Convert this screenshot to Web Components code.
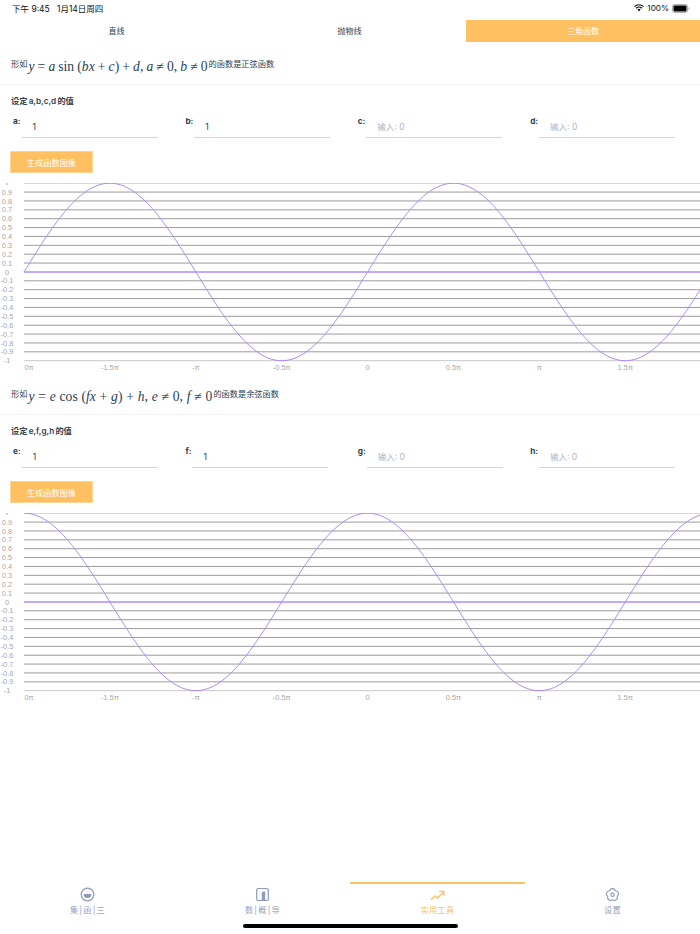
<!DOCTYPE html>
<html lang="zh">
<head>
<meta charset="utf-8">
<title>三角函数</title>
<style>
  html, body { margin: 0; padding: 0; background: #fff; }
  body { font-family: "Inter", "Liberation Sans", "Noto Sans CJK SC", sans-serif; color: #2c3e50; }
</style>
</head>
<body>
<app-page>
  <status-bar slot="status"></status-bar>
  <top-tabs slot="tabs"></top-tabs>
  <trig-panel letters="a,b,c,d" values="1,1" fn="sin" func-name="正弦函数" style="--math-gap: -0.27px">
    <span slot="formula"><i>y</i> = <i>a</i> sin (<i>bx</i> + <i>c</i>) + <i>d</i>, <i>a</i> ≠ 0, <i>b</i> ≠ 0</span>
  </trig-panel>
  <trig-panel letters="e,f,g,h" values="1,1" fn="cos" func-name="余弦函数" style="--math-gap: 0.4px">
    <span slot="formula"><i>y</i> = <i>e</i> cos (<i>fx</i> + <i>g</i>) + <i>h</i>, <i>e</i> ≠ 0, <i>f</i> ≠ 0</span>
  </trig-panel>
  <bottom-tabs slot="bottom"></bottom-tabs>
</app-page>

<script>
const SVG_NS = "http://www.w3.org/2000/svg";

class AppPage extends HTMLElement {
  constructor () {
    super();
    this.attachShadow({ mode: "open" });
    this.shadowRoot.innerHTML = `
      <style>
        :host { display: flex; flex-direction: column; width: 700px; height: 934px; position: relative; overflow: hidden; background: #fff; }
        main { flex: 1; min-height: 0; }
        .home { position: absolute; left: 243px; bottom: 6px; width: 215px; height: 4px; border-radius: 2px; background: #000; }
      </style>
      <slot name="status"></slot>
      <slot name="tabs"></slot>
      <main><slot></slot></main>
      <slot name="bottom"></slot>
      <div class="home"></div>
    `;
  }
}

class StatusBar extends HTMLElement {
  constructor () {
    super();
    this.attachShadow({ mode: "open" });
    this.shadowRoot.innerHTML = `
      <style>
        :host { display: flex; justify-content: space-between; align-items: center; height: 20px; padding: 0 10px 4px 12px; box-sizing: border-box; font-size: 8.5px; color: #111; }
        .right { display: flex; align-items: center; gap: 3px; font-size: 8.2px; }
        span { white-space: pre; }
      </style>
      <span>下午 9:45   1月14日周四</span>
      <div class="right">
        <svg width="10" height="8" viewBox="0 0 10 8">
          <path d="M0.4 2.6a6.6 6.6 0 0 1 9.2 0" fill="none" stroke="#111" stroke-width="1.2"/>
          <path d="M2.1 4.3a4.2 4.2 0 0 1 5.8 0" fill="none" stroke="#111" stroke-width="1.2"/>
          <path d="M3.4 5.5a2.2 2.2 0 0 1 3.2 0L5 7.4z" fill="#111"/>
        </svg>
        <span>100%</span>
        <svg width="18" height="9" viewBox="0 0 18 9">
          <rect x="0.5" y="0.5" width="15" height="8" rx="2" fill="none" stroke="#aaa"/>
          <rect x="1.5" y="1.5" width="13" height="6" rx="1" fill="#000"/>
          <path d="M16.5 3v3a1.6 1.6 0 0 0 0-3z" fill="#aaa"/>
        </svg>
      </div>
    `;
  }
}

class TopTabs extends HTMLElement {
  constructor () {
    super();
    this.attachShadow({ mode: "open" });
    this.shadowRoot.innerHTML = `
      <style>
        :host { display: grid; grid-template-columns: 233px 233px 234px; height: 22px; font-size: 8px; }
        div { display: flex; align-items: center; justify-content: center; padding-bottom: 1px; color: #2c3e50; }
        .on { background: #fec060; color: #fff; }
      </style>
      <div>直线</div>
      <div>抛物线</div>
      <div class="on">三角函数</div>
    `;
  }
}

const panelTemplate = document.createElement("template");
panelTemplate.innerHTML = `
  <style>
    :host { display: block; height: 330px; font-size: 8.2px; }
    .formula { display: flex; align-items: flex-start; height: 43px; box-sizing: border-box; padding: 15px 11px 0; border-bottom: 1px solid #f3f3f3; }
    .formula .txt { line-height: 14px; }
    .math { font-family: "Liberation Serif", serif; font-size: 13.6px; line-height: 20px; margin: 0 1px; white-space: pre; word-spacing: var(--math-gap, 0); color: #2c3e50; }
    .set { margin: 10px 11px 0; height: 12px; line-height: 12px; font-weight: 600; white-space: pre; word-spacing: -0.8px; }
    .inputs { display: grid; grid-template-columns: repeat(4, 172.4px); padding: 9px 0 0 13px; height: 31px; box-sizing: border-box; }
    button { display: block; margin: 13px 0 0 10px; width: 83px; height: 22px; padding: 0; border: 1px solid #fed598; background: #fec060; color: #fff; font: inherit; }
    line-chart { margin-top: 10px; }
  </style>
  <div class="formula">
    <span class="txt">形如</span>
    <span class="math"><slot name="formula"></slot></span>
    <span class="txt" id="tail"></span>
  </div>
  <div class="set" id="set"></div>
  <div class="inputs" id="inputs"></div>
  <button type="button">生成函数图像</button>
  <line-chart></line-chart>
`;

class TrigPanel extends HTMLElement {
  constructor () {
    super();
    this.attachShadow({ mode: "open" });
    const content = panelTemplate.content.cloneNode(true);

    const letters = this.getAttribute("letters").split(",");
    const values = this.getAttribute("values").split(",");
    content.querySelector("#tail").textContent = "的函数是" + this.getAttribute("func-name");
    content.querySelector("#set").textContent = "设定 " + letters.join(",") + " 的值";

    const inputs = content.querySelector("#inputs");
    letters.forEach((letter, i) => {
      const field = document.createElement("value-field");
      field.setAttribute("label", letter);
      if (values[i]) field.setAttribute("value", values[i]);
      inputs.appendChild(field);
    });

    content.querySelector("line-chart").setAttribute("fn", this.getAttribute("fn"));
    this.shadowRoot.appendChild(content);
  }
}

class ValueField extends HTMLElement {
  constructor () {
    super();
    this.attachShadow({ mode: "open" });
  }

  connectedCallback () {
    const value = this.getAttribute("value");
    this.shadowRoot.innerHTML = `
      <style>
        :host { display: flex; align-items: flex-start; gap: 1px; font-size: 8.2px; }
        label { font-weight: 700; line-height: 10px; }
        .box { width: 136px; height: 22px; box-sizing: border-box; padding: 5px 0 0 11px; border-bottom: 1px solid #fdcf8a; line-height: 12px; font-size: 8.5px; }
        .empty { color: #adb5c9; }
      </style>
      <label>${this.getAttribute("label")}:</label>
      <div class="box ${value ? "" : "empty"}">${value || "输入: 0"}</div>
    `;
  }
}

class LineChart extends HTMLElement {
  constructor () {
    super();
    this.attachShadow({ mode: "open" });
    this.shadowRoot.innerHTML = `
      <style>
        :host { display: block; height: 189px; }
        svg { display: block; font-family: "Liberation Sans", sans-serif; font-size: 7.4px; }
      </style>
    `;
  }

  connectedCallback () {
    const left = 24, right = 700, top = 5.2, bottom = 182.7;
    const unit = 85.9;  // pixels per half pi
    const step = (bottom - top) / 20;
    const fn = this.getAttribute("fn") === "cos" ? Math.cos : Math.sin;

    const svg = document.createElementNS(SVG_NS, "svg");
    svg.setAttribute("width", 700);
    svg.setAttribute("height", 189);
    svg.setAttribute("viewBox", "0 5 700 189");

    const add = (tag, attrs, text) => {
      const el = document.createElementNS(SVG_NS, tag);
      Object.keys(attrs).forEach((k) => el.setAttribute(k, attrs[k]));
      if (text !== undefined) el.textContent = text;
      svg.appendChild(el);
    };

    for (let i = 0; i <= 20; i++) {
      const y = top + i * step;
      const val = (10 - i) / 10;
      const isZero = i === 10;
      const edge = i === 0 || i === 20;
      add("line", {
        x1: left, x2: right, y1: y, y2: y,
        stroke: isZero ? "#b08cf8" : edge ? "#c8c8c8" : "#9c9c9c",
        "stroke-width": isZero ? 1.5 : 1
      });
      // the top label is cut by the canvas edge in the app, only its foot shows
      if (i === 0) add("rect", { x: 6.5, y: 5, width: 1, height: 2, fill: "#a8a8a8" });
      else add("text", { x: 7, y: y + 2.6, "text-anchor": "middle", fill: "#a8a8a8" }, val === 0 ? "0" : String(val));
    }

    const xLabels = ["0π", "-1.5π", "-π", "-0.5π", "0", "0.5π", "π", "1.5π"];
    xLabels.forEach((label, i) => {
      const x = i === 0 ? 29 : left + i * unit;
      add("text", { x: x, y: 191.5, "text-anchor": "middle", fill: "#a8a8a8" }, label);
    });

    let d = "";
    for (let x = left; x <= right; x += 2) {
      const y = (top + bottom) / 2 - fn((x - left) / unit * Math.PI / 2) * (bottom - top) / 2;
      d += (d ? "L" : "M") + x + " " + y.toFixed(2);
    }
    add("path", { d: d, fill: "none", stroke: "#b08cf8", "stroke-width": 1 });

    this.shadowRoot.appendChild(svg);
  }
}

const bottomIcons = {
  home: `<circle cx="7.5" cy="7.5" r="6.3" fill="none" stroke="#8f9ab8" stroke-width="1.2"/><path d="M3.6 7h7.8a3.9 3.9 0 0 1-7.8 0z" fill="#8f9ab8"/>`,
  book: `<rect x="1.7" y="1.5" width="11.6" height="12" rx="1.6" fill="none" stroke="#8f9ab8" stroke-width="1.2"/><path d="M6.8 4.8h3.4v8.6h-3.4z" fill="#8f9ab8"/>`,
  tool: `<path d="M1.4 12.4l3.8-3.4 2.4 2 5.8-6" fill="none" stroke="#fec060" stroke-width="1.4" stroke-linecap="round" stroke-linejoin="round"/><path d="M9.8 4.4h4v4" fill="none" stroke="#fec060" stroke-width="1.4" stroke-linecap="round" stroke-linejoin="round"/>`,
  gear: `<path d="M4.56 3.75A3.1 3.1 0 0 1 10.44 3.75A3.1 3.1 0 0 1 12.26 9.35A3.1 3.1 0 0 1 7.5 12.8A3.1 3.1 0 0 1 2.74 9.35A3.1 3.1 0 0 1 4.56 3.75z" fill="none" stroke="#8f9ab8" stroke-width="1.1" stroke-linejoin="round"/><circle cx="7.5" cy="7.8" r="1.7" fill="none" stroke="#8f9ab8" stroke-width="1.1"/>`
};

class BottomTabs extends HTMLElement {
  constructor () {
    super();
    this.attachShadow({ mode: "open" });
    const tabs = [["home", "集 | 函 | 三"], ["book", "数 | 概 | 导"], ["tool", "实用工具"], ["gear", "设置"]];
    this.shadowRoot.innerHTML = `
      <style>
        :host { display: grid; grid-template-columns: repeat(4, 175px); height: 52px; font-size: 8.2px; }
        .tab { display: flex; flex-direction: column; align-items: center; border-top: 2.5px solid transparent; padding-top: 3px; gap: 1px; color: #98a2bd; letter-spacing: 0.2px; word-spacing: -1.5px; }
        .on { border-top-color: #fec060; color: #fec060; }
        svg { display: block; }
      </style>
      ${tabs.map(([icon, label]) => `
        <div class="tab ${icon === "tool" ? "on" : ""}">
          <svg width="15" height="15" viewBox="0 0 15 15">${bottomIcons[icon]}</svg>
          <span>${label}</span>
        </div>`).join("")}
    `;
  }
}

customElements.define("line-chart", LineChart);
customElements.define("value-field", ValueField);
customElements.define("trig-panel", TrigPanel);
customElements.define("status-bar", StatusBar);
customElements.define("top-tabs", TopTabs);
customElements.define("bottom-tabs", BottomTabs);
customElements.define("app-page", AppPage);
</script>
</body>
</html>
